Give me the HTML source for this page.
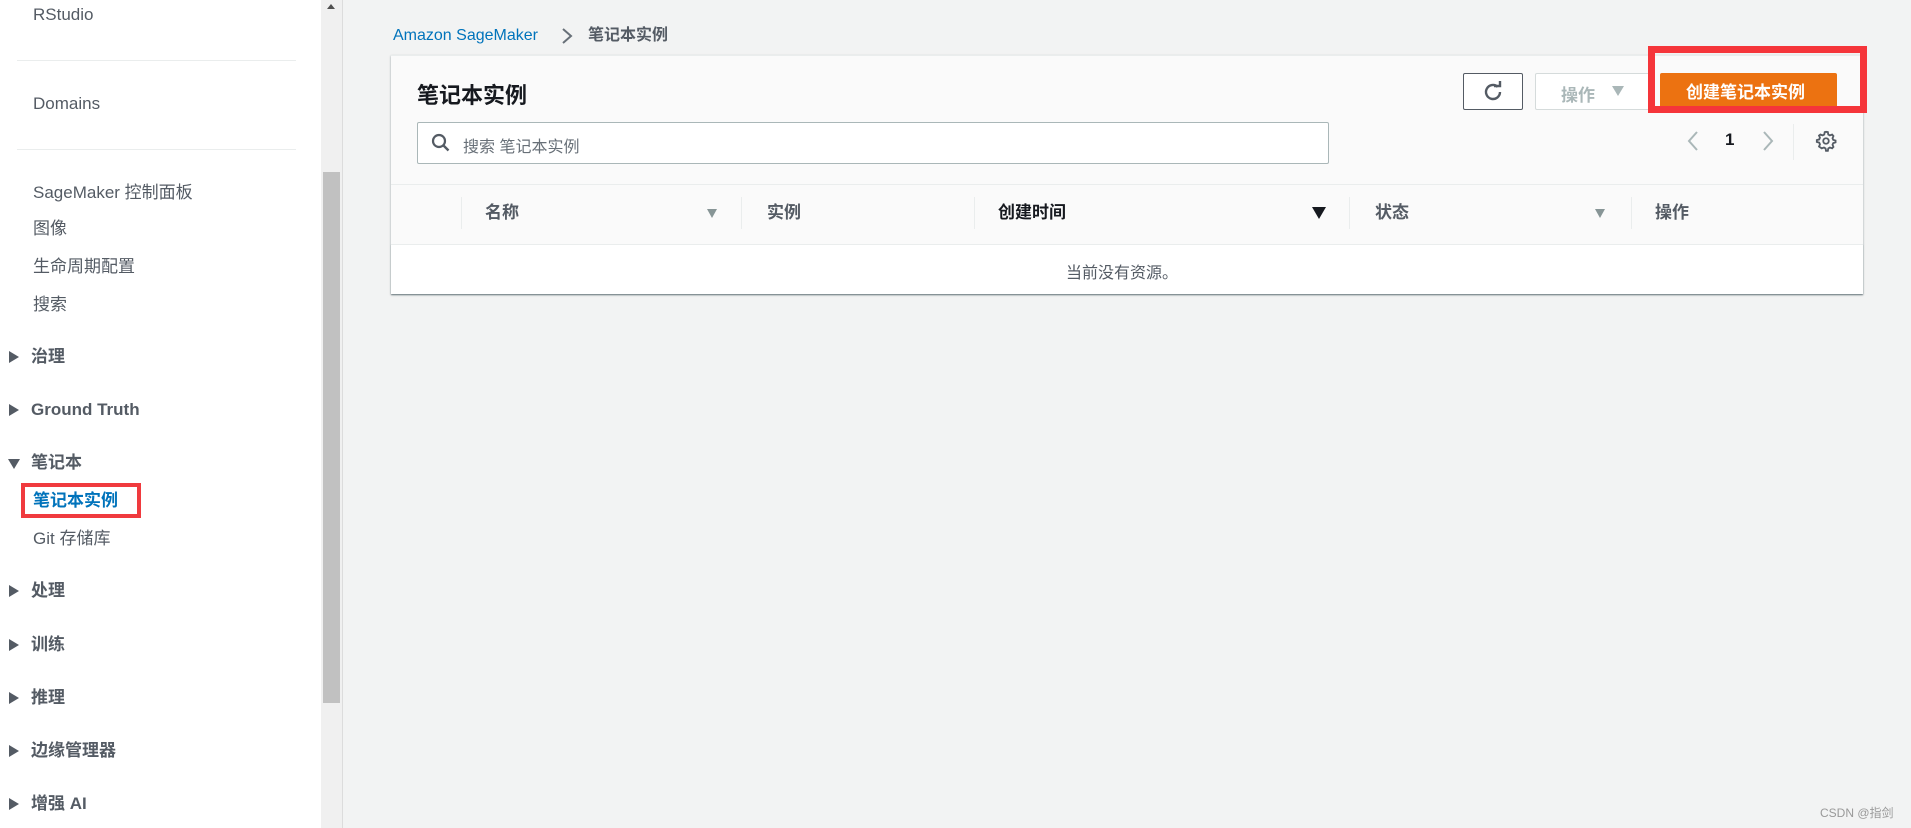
<!DOCTYPE html>
<html><head><meta charset="utf-8"><style>
*{box-sizing:border-box;margin:0;padding:0}
body{width:1911px;height:828px;overflow:hidden;background:#f2f3f3;font-family:"Liberation Sans","Noto Sans CJK SC",sans-serif;position:relative;color:#16191f}
.a{position:absolute;white-space:nowrap}
#side{position:absolute;left:0;top:0;width:321px;height:828px;background:#fff}
.s{position:absolute;left:33px;font-size:17px;color:#545b64;line-height:20px}
.g{position:absolute;left:31px;font-size:17px;font-weight:bold;color:#545b64;line-height:20px}
.tri{position:absolute;left:9px;width:0;height:0;border-top:6px solid transparent;border-bottom:6px solid transparent;border-left:10px solid #545b64}
.hr{position:absolute;left:17px;width:279px;height:1px;background:#eaeded}
.th{position:absolute;top:203px;font-size:17px;font-weight:bold;color:#545b64;line-height:20px}
.dv{position:absolute;top:197px;width:1px;height:32px;background:#eaeded}
.sort{position:absolute;top:209px;width:0;height:0;border-left:5px solid transparent;border-right:5px solid transparent;border-top:9px solid #879596}
</style></head><body>
<div id="side">
<div class="s" style="top:5px">RStudio</div>
<div class="hr" style="top:60px"></div>
<div class="s" style="top:94px">Domains</div>
<div class="hr" style="top:149px"></div>
<div class="s" style="top:183px">SageMaker 控制面板</div>
<div class="s" style="top:219px">图像</div>
<div class="s" style="top:257px">生命周期配置</div>
<div class="s" style="top:295px">搜索</div>
<div class="tri" style="top:351px"></div><div class="g" style="top:347px">治理</div>
<div class="tri" style="top:404px"></div><div class="g" style="top:400px">Ground Truth</div>
<div style="position:absolute;left:8px;top:459px;border-left:6px solid transparent;border-right:6px solid transparent;border-top:10px solid #545b64"></div><div class="g" style="top:453px">笔记本</div>
<div style="position:absolute;left:21px;top:483px;width:120px;height:35px;border:4px solid #f03a3e"></div>
<div class="g" style="top:491px;left:33px;color:#0073bb">笔记本实例</div>
<div class="s" style="top:529px">Git 存储库</div>
<div class="tri" style="top:585px"></div><div class="g" style="top:581px">处理</div>
<div class="tri" style="top:639px"></div><div class="g" style="top:635px">训练</div>
<div class="tri" style="top:692px"></div><div class="g" style="top:688px">推理</div>
<div class="tri" style="top:745px"></div><div class="g" style="top:741px">边缘管理器</div>
<div class="tri" style="top:798px"></div><div class="g" style="top:794px">增强 AI</div>
</div>
<div style="position:absolute;left:321px;top:0;width:21px;height:828px;background:#f0f0f0"></div>
<div style="position:absolute;left:323px;top:172px;width:17px;height:531px;background:#c1c1c1"></div>
<div style="position:absolute;left:327px;top:4px;border-left:4px solid transparent;border-right:4px solid transparent;border-bottom:5px solid #505050"></div>
<div style="position:absolute;left:342px;top:0;width:1px;height:828px;background:#dcdcdc"></div>

<div class="a" style="left:393px;top:26px;font-size:16px;line-height:20px;color:#0073bb">Amazon SageMaker</div>
<svg class="a" style="left:560px;top:27px" width="14" height="18"><path d="M3 2l8 7-8 7" fill="none" stroke="#687078" stroke-width="2"/></svg>
<div class="a" style="left:588px;top:26px;font-size:16px;line-height:20px;font-weight:bold;color:#545b64">笔记本实例</div>

<div style="position:absolute;left:391px;top:55px;width:1472px;height:239px;background:#fafafa;box-shadow:0 1px 2px rgba(0,28,36,.4);border-top:1px solid #eaeded"></div>
<div style="position:absolute;left:391px;top:244px;width:1472px;height:50px;background:#fff;border-top:1px solid #eaeded;box-shadow:0 1px 1px rgba(0,28,36,.3)"></div>
<div style="position:absolute;left:391px;top:184px;width:1472px;height:1px;background:#eaeded"></div>
<div class="a" style="left:417px;top:78px;font-size:22px;font-weight:bold">笔记本实例</div>

<div class="a" style="left:1463px;top:73px;width:60px;height:37px;border:1px solid #545b64;border-radius:2px;background:#fff"></div>
<svg class="a" style="left:1481px;top:80px" width="24" height="24" viewBox="0 0 24 24"><path d="M19 12a7 7 0 1 1-2.3-5.2" fill="none" stroke="#545b64" stroke-width="2.4"/><path d="M13 6h6V1" fill="none" stroke="#545b64" stroke-width="2.4"/></svg>
<div class="a" style="left:1535px;top:73px;width:115px;height:37px;border:1px solid #d5dbdb;border-radius:2px;background:#fff"></div>
<div class="a" style="left:1561px;top:81px;font-size:17px;font-weight:bold;color:#aab7b8">操作</div>
<div class="a" style="left:1612px;top:86px;border-left:6px solid transparent;border-right:6px solid transparent;border-top:10px solid #aab7b8"></div>
<div class="a" style="left:1660px;top:73px;width:177px;height:37px;background:#ec7211;border-radius:2px"></div>
<div class="a" style="left:1686px;top:78px;font-size:17px;font-weight:bold;color:#fff">创建笔记本实例</div>
<div class="a" style="left:1648px;top:46px;width:219px;height:67px;border:7px solid #f5353a"></div>

<div class="a" style="left:417px;top:122px;width:912px;height:42px;border:1px solid #aab7b8;border-radius:2px;background:#fff"></div>
<svg class="a" style="left:431px;top:133px" width="20" height="20"><circle cx="8" cy="8" r="6" fill="none" stroke="#545b64" stroke-width="2.2"/><path d="M12.5 12.5l5 5" stroke="#545b64" stroke-width="2.4"/></svg>
<div class="a" style="left:463px;top:133px;font-size:16px;color:#687078">搜索 笔记本实例</div>

<svg class="a" style="left:1686px;top:130px" width="14" height="22"><path d="M11 2l-8 9 8 9" fill="none" stroke="#aab7b8" stroke-width="2"/></svg>
<div class="a" style="left:1725px;top:130px;font-size:17px;font-weight:bold">1</div>
<svg class="a" style="left:1761px;top:130px" width="14" height="22"><path d="M3 2l8 9-8 9" fill="none" stroke="#aab7b8" stroke-width="2"/></svg>
<div class="a" style="left:1793px;top:124px;width:1px;height:36px;background:#eaeded"></div>
<svg class="a" style="left:1815px;top:130px" width="22" height="22" viewBox="0 0 24 24"><path d="M12 2l2 .3.5 2.6 1.7 1 2.5-.9 1.4 1.6-1 2.4.8 1.8 2.5.7v2l-2.5.8-.8 1.8 1 2.4-1.4 1.5-2.5-.9-1.700 1-.5 2.6h-2l-.5-2.6-1.7-1-2.5.9L4.4 18l1-2.4-.8-1.8L2 13v-2l2.6-.7.8-1.8-1-2.4L5.9 5l2.5.9 1.7-1 .5-2.6z" fill="none" stroke="#545b64" stroke-width="2"/><circle cx="12" cy="12" r="3" fill="none" stroke="#545b64" stroke-width="2"/></svg>

<div class="dv" style="left:461px"></div><div class="dv" style="left:741px"></div><div class="dv" style="left:974px"></div><div class="dv" style="left:1349px"></div><div class="dv" style="left:1631px"></div>
<div class="th" style="left:485px">名称</div><div class="sort" style="left:707px"></div>
<div class="th" style="left:767px">实例</div>
<div class="th" style="left:998px;color:#16191f">创建时间</div><div style="position:absolute;left:1312px;top:207px;border-left:7px solid transparent;border-right:7px solid transparent;border-top:12px solid #16191f"></div>
<div class="th" style="left:1375px">状态</div><div class="sort" style="left:1595px"></div>
<div class="th" style="left:1655px">操作</div>
<div class="a" style="left:1066px;top:259px;font-size:16px;color:#545b64">当前没有资源。</div>
<div class="a" style="left:1820px;top:804px;font-size:12px;color:#999">CSDN @指剑</div>
</body></html>
